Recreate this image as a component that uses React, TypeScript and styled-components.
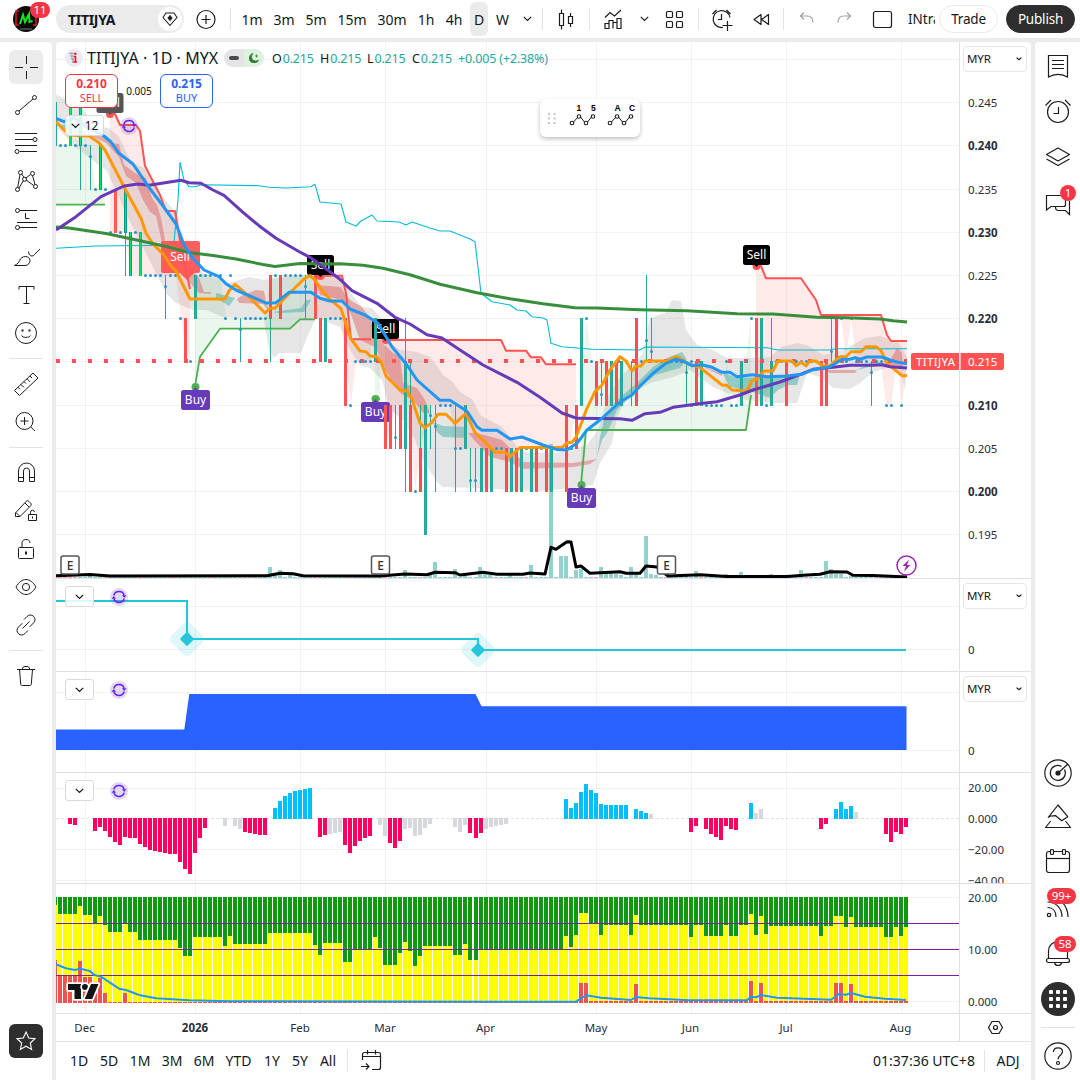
import React from "react";
import styled, { createGlobalStyle } from "styled-components";

const GlobalStyle = createGlobalStyle`
  * { box-sizing: border-box; }
  body {
    margin: 0;
    background: #ebebeb;
    color: #131722;
    font-family: "Noto Sans", "Open Sans", sans-serif;
    overflow: hidden;
  }
  svg { display: block; }
`;

/* ---------- layout ---------- */

const Shell = styled.div`
  width: 1080px;
  height: 1080px;
  display: grid;
  grid-template-rows: 38px 1038px;
  row-gap: 4px;
`;

const Header = styled.header`
  display: flex;
  align-items: center;
  background: #fff;
`;

const Main = styled.main`
  display: grid;
  grid-template-columns: 52px 975px 45px;
  column-gap: 4px;
`;

const Column = styled.div<{ $radius?: string }>`
  display: flex;
  flex-direction: column;
  align-items: center;
  background: #fff;
  border-radius: ${(p) => p.$radius || "0"};
`;

const Slot = styled.div<{ $w: number; $mr?: number }>`
  width: ${(p) => p.$w}px;
  margin-right: ${(p) => p.$mr || 0}px;
  flex: none;
  height: 38px;
  display: flex;
  align-items: center;
  justify-content: center;
  position: relative;
  font-size: 14px;
  white-space: nowrap;
`;

const Divider = styled.div<{ $ml: number; $mr: number }>`
  width: 1px;
  height: 22px;
  background: #e3e3e3;
  flex: none;
  margin: 0 ${(p) => p.$mr}px 0 ${(p) => p.$ml}px;
`;

const SymbolPill = styled.div`
  width: 128px;
  height: 28px;
  padding: 0 2px 0 12px;
  flex: none;
  border-radius: 14px;
  background: #ebebeb;
  display: flex;
  align-items: center;
  justify-content: space-between;
  font-size: 14px;
  font-weight: 700;
  letter-spacing: -0.3px;
`;

const PillCircle = styled.div`
  width: 24px;
  height: 24px;
  border-radius: 50%;
  background: #fff;
  display: flex;
  align-items: center;
  justify-content: center;
`;

const ActiveInterval = styled.div`
  width: 18px;
  height: 34px;
  margin: 0 0 0 2px;
  border-radius: 6px;
  background: #ebebeb;
  display: flex;
  align-items: center;
  justify-content: center;
  font-size: 14px;
`;

const LayoutName = styled.div`
  width: 27px;
  margin: 0 4px 0 5px;
  overflow: hidden;
  white-space: nowrap;
  font-size: 13.5px;
`;

const Pill = styled.div<{ $w: number; $dark?: boolean }>`
  width: ${(p) => p.$w}px;
  height: 28px;
  flex: none;
  border-radius: 14px;
  border: 1px solid ${(p) => (p.$dark ? "#2e2e2e" : "#ebebeb")};
  background: ${(p) => (p.$dark ? "#2e2e2e" : "#fff")};
  color: ${(p) => (p.$dark ? "#fff" : "#131722")};
  display: flex;
  align-items: center;
  justify-content: center;
  margin-right: ${(p) => (p.$dark ? 0 : 8)}px;
  font-size: 13.5px;
  letter-spacing: -0.2px;
`;

const Badge = styled.div<{ $top: number; $left: number; $w: number }>`
  position: absolute;
  top: ${(p) => p.$top}px;
  left: ${(p) => p.$left}px;
  width: ${(p) => p.$w}px;
  height: 16px;
  border-radius: 8px;
  background: #f23645;
  color: #fff;
  font-size: 11.5px;
  line-height: 16px;
  text-align: center;
`;

const Tool = styled.div<{ $h: number }>`
  height: ${(p) => p.$h}px;
  width: 100%;
  flex: none;
  position: relative;
  display: flex;
  align-items: center;
  justify-content: center;
`;

const ToolFace = styled.div<{ $dark?: boolean; $active?: boolean }>`
  width: 34px;
  height: 34px;
  border-radius: 6px;
  display: flex;
  align-items: center;
  justify-content: center;
  background: ${(p) => (p.$dark ? "#2e2e2e" : p.$active ? "#ebebeb" : "transparent")};
`;

const ToolRule = styled.div<{ $m: string }>`
  width: 34px;
  height: 1px;
  flex: none;
  margin: ${(p) => p.$m};
  background: #e3e3e3;
`;

const ToolStack = styled(Column)`
  padding-top: 6px;
`;

const Spacer = styled.div`
  flex: 1;
`;

const RoundFace = styled.div`
  width: 34px;
  height: 34px;
  border-radius: 50%;
  background: #2e2e2e;
  display: grid;
  place-items: center;
`;

/* ---------- chart area ---------- */

const ChartColumn = styled.section`
  background: #fff;
  display: flex;
  flex-direction: column;
  border-radius: 4px 4px 0 0;
  overflow: hidden;
`;

const PaneBox = styled.div<{ $h: number }>`
  position: relative;
  height: ${(p) => p.$h}px;
  flex: none;
  border-bottom: 1px solid #e0e0ea;
`;

const Overlay = styled.div<{ $pt?: number }>`
  position: absolute;
  top: 0;
  left: 9px;
  padding-top: ${(p) => p.$pt || 7}px;
`;

const LegendRow = styled.div`
  display: flex;
  align-items: center;
  height: 18px;
  white-space: nowrap;
`;

const Title = styled.span`
  font-size: 16px;
  margin-left: 4px;
  width: 137px;
  letter-spacing: 0.05px;
`;

const Status = styled.div`
  width: 40px;
  height: 18px;
  border-radius: 9px;
  overflow: hidden;
  display: flex;
  margin-right: 8px;
`;

const StatusHalf = styled.div<{ $bg: string }>`
  flex: 1;
  background: ${(p) => p.$bg};
  display: flex;
  align-items: center;
  justify-content: center;
`;

const Ohlc = styled.span<{ $w: number }>`
  width: ${(p) => p.$w}px;
  font-size: 12.5px;
  letter-spacing: -0.15px;
  color: #26a69a;
  b {
    font-weight: 400;
    color: #131722;
    margin-right: 1px;
  }
`;

const TradeRow = styled.div`
  display: flex;
  align-items: center;
  margin-top: 7px;
`;

const TradeButton = styled.div<{ $color: string }>`
  width: 53px;
  height: 34px;
  border: 1px solid ${(p) => p.$color};
  border-radius: 6px;
  background: #fff;
  color: ${(p) => p.$color};
  text-align: center;
  font-size: 11px;
  line-height: 14px;
  padding-top: 2px;
  strong {
    display: block;
    font-size: 12px;
    letter-spacing: -0.1px;
  }
`;

const Spread = styled.div`
  width: 42px;
  text-align: center;
  font-size: 10px;
`;

const StudyRow = styled.div<{ $mt?: number }>`
  display: flex;
  align-items: center;
  margin-top: ${(p) => p.$mt || 0}px;
  gap: 16px;
`;

const Collapse = styled.div<{ $w: number }>`
  width: ${(p) => p.$w}px;
  height: 21px;
  border: 1px solid #d9d9dc;
  border-radius: 3px;
  background: rgba(255, 255, 255, 0.85);
  display: flex;
  align-items: center;
  justify-content: center;
  gap: 5px;
  font-size: 12px;
`;

const Currency = styled.div<{ $top: number }>`
  position: absolute;
  top: ${(p) => p.$top}px;
  right: 4px;
  width: 64px;
  height: 26px;
  border: 1px solid #e6e6ea;
  border-radius: 4px;
  background: #fff;
  padding: 0 4px 1px 3px;
  display: flex;
  align-items: center;
  justify-content: space-between;
  font-size: 11.5px;
  letter-spacing: -0.1px;
`;

const FloatingBar = styled.div`
  position: absolute;
  left: 484px;
  top: 57px;
  width: 100px;
  height: 38px;
  border-radius: 6px;
  background: #fff;
  box-shadow: 0 2px 4px rgba(0, 0, 0, 0.25);
`;

const RangeBar = styled.div`
  height: 37px;
  display: flex;
  align-items: center;
  padding-left: 8px;
`;

/* ---------- icons ---------- */

const Icon: React.FC<{ size?: number; color?: string; sw?: number; children: React.ReactNode }> = ({
  size = 28,
  color = "#1c1c1c",
  sw = 1,
  children,
}) => (
  <svg width={size} height={size} viewBox={`0 0 ${size} ${size}`} fill="none" stroke={color} strokeWidth={sw}>
    {children}
  </svg>
);

const Chevron = ({ s = 1.1 }: { s?: number }) => (
  <svg width="9" height="6" viewBox="0 0 9 6" fill="none" stroke="#131722" strokeWidth={s}>
    <path d="M.8 .9l3.7 3.5L8.2 .9" />
  </svg>
);

const SmallChevron = () => (
  <svg width="6" height="4" viewBox="0 0 6 4" fill="none" stroke="#131722" strokeWidth="1.2">
    <path d="M.6 .6L3 2.800 5.400 .6" />
  </svg>
);

const leftTools: { [key: string]: React.ReactNode } = {
  cross: <path d="M3 14.5h8M18 14.5h8M14.5 3v8M14.5 18v8" />,
  trend: (
    <>
      <circle cx="5.5" cy="21.5" r="2" />
      <circle cx="22.5" cy="6.5" r="2" />
      <path d="M7 20L21 8" />
    </>
  ),
  fib: (
    <>
      <path d="M3 4.5h22M3 10.5h18M3 16.5h22M7.5 22.5H25" />
      <circle cx="23" cy="10.5" r="2" />
      <circle cx="5" cy="22.5" r="2" />
    </>
  ),
  pattern: (
    <>
      <path d="M5.7 20.5L8 7.5M9.7 7L12 10.6M7 21L11.5 13.5M14 11L18.500 7.500M20.500 8.500L23 17.500M14 13L21.800 18.500" />
      <circle cx="5.500" cy="22.500" r="2" />
      <circle cx="8.500" cy="5.500" r="2" />
      <circle cx="12.500" cy="12.300" r="2" />
      <circle cx="20.500" cy="6.500" r="2" />
      <circle cx="23.500" cy="19.500" r="2" />
    </>
  ),
  forecast: (
    <>
      <path d="M7.500 5.500H25M5 17.500h20M7.500 22.500H25M13.500 8v5.500h4" />
      <circle cx="5.500" cy="5.500" r="2" />
      <circle cx="5.500" cy="22.500" r="2" />
    </>
  ),
  brush: (
    <path d="M2.500 22.500h10.500c3 0 5-2.500 5-5s-2-4-4.500-4c-3 0-4.600 1.500-5.500 3.500-.9 2.200-2.500 4.200-5.500 5.500zM16.500 8.500c.2 3 1.500 4.500 3.500 4.500 1.500 0 2.300-1 3-2l5-5" />
  ),
  text: <path d="M7 8.500v-3h15v3M14.500 5.500v17M11.500 22.500h6" />,
  smile: (
    <>
      <circle cx="14" cy="14" r="10.500" />
      <path d="M9.500 16.500c1 2.500 8 2.500 9 0" />
      <path d="M9.500 11.500h2M16.500 11.500h2" strokeWidth="2" />
    </>
  ),
  ruler: (
    <path d="M2.500 20.500L21 3l5 5L7.500 25.500zM6 17.300l2 2M9 14.500l3 3M12 11.600l2 2M15 8.800l3 3M18 6l2 2" />
  ),
  zoom: (
    <>
      <circle cx="12.500" cy="13" r="8.500" />
      <path d="M12.500 9v8M8.500 13h8M18.800 19l4 4" />
    </>
  ),
  magnet: <path d="M6.500 22.500V12a8 8 0 0 1 16 0v10.500h-5V12a3 3 0 0 0-6 0v10.500zM6.500 18.500h5M17.500 18.500h5" />,
  pencil: (
    <>
      <path d="M3.500 16L14 4.500c1-1 2-1 3 0l1.500 1.500c1 1 1 2 0 3L8 19.500H3.500zM13 6l4 4M4 15.500l4 4" />
      <path d="M16.500 17.500h8v6h-8zM18.500 17.500v-2a2 2 0 0 1 4-.5" />
      <path d="M20.500 19.500v2" />
    </>
  ),
  lock: (
    <>
      <path d="M6.500 13.500a1 1 0 0 1 1-1h13a1 1 0 0 1 1 1v9a1 1 0 0 1-1 1h-13a1 1 0 0 1-1-1zM10 12.500V9a4 4 0 0 1 8-1" />
      <path d="M14 16.500v3" strokeWidth="2" />
    </>
  ),
  eye: (
    <>
      <path d="M4 14c3-5 6.500-7.500 10-7.500S21 9 24 14c-3 5-6.500 7.500-10 7.500S7 19 4 14z" />
      <circle cx="14" cy="14" r="3.600" />
    </>
  ),
  link: (
    <path d="M12 8.500l3-3c2-2 4.500-2 6.500-.2 2 2 2 4.500.2 6.500l-4 4M16 19.500l-3 3c-2 2-4.500 2-6.500.2-2-2-2-4.500-.2-6.500l4-4M10.500 17.500l7-7" />
  ),
  trash: <path d="M5 7.500h18M7.500 7.500l1.200 14.500c.1 1 .6 1.500 1.500 1.500h7.600c.9 0 1.400-.5 1.500-1.500L20.500 7.500M10.500 7c0-1.500 1-2.500 2.500-2.500h2c1.500 0 2.500 1 2.500 2.500" />,
};

const groups = [
  ["trend", "fib", "pattern", "forecast", "brush", "text", "smile"],
  ["ruler", "zoom"],
  ["magnet", "pencil", "lock", "eye", "link"],
  ["trash"],
];

const Refresh = () => (
  <svg width="18" height="18" viewBox="-9 -9 18 18" fill="none">
    <circle r="9" fill="#673ab7" opacity=".2" />
    <path d="M-5.200 -1.500A5.400 5.400 0 0 1 5.200 -1.500M5.200 1.500A5.400 5.400 0 0 1 -5.200 1.500" stroke="#651fff" strokeWidth="1.4" />
    <path d="M3 -1.700h4.400L5.200 1zM-3 1.700h-4.400L-5.200 -1z" fill="#651fff" />
  </svg>
);

/* ---------- chart data ---------- */

const LEFT = 55.3;
const STEP = 5.006;
const barX = (i: number) => Math.round(LEFT + STEP * i - 2.3);

const monthLines = [85, 195, 300, 385, 486, 596, 691, 786, 901];
const priceRows = [59, 102, 145, 189, 232, 275, 318, 361, 405, 448, 491, 534];

const ma = {
  green:
    "56,227 69,228 106,233.500 139,240.500 166,246.500 189,252.500 213,255.500 236,259 263,264.500 275,266.500 300,263.500 326,264 340,263.700 363,265.300 383,268.300 410,274.700 440,284.300 477,292.700 510,298.700 543,303.700 575,307.700 597,308 640,309.700 687,310.700 737,313.700 773,314 817,317.300 847,317.700 880,319 893,320.700 907,322",
  purple:
    "56,230 76,216.700 101,196.700 124,186 138,184 149,185.300 181,180.300 189,182.700 201,183.300 213,190 224,195.300 243,212.300 259,225.700 276,238.300 301,252.700 310,257.300 330,271.700 340,279.300 352,290.700 377,303.300 395,317.300 410,324 427,334.700 442,338 460,350 483,365 517,382.300 540,397.300 562,413 577,418.300 620,418.700 632,420.300 645,413.700 660,412.300 673,407.300 703,403.300 717,401.700 740,395 753,390 780,382 800,374.700 813,369.300 833,367.300 850,365.300 873,365.300 882,364.700 890,366.700 907,368",
  blue:
    "56,118.300 64,121.700 74,117.300 83,124 89,128 104,136 111,142 119,153.300 133,164 149,187.300 163,206 176,224 184,245 193,258.300 204,270 219,276.700 226,283.700 236,290 253,297.300 266,303 276,302.700 289,292.300 311,292.300 320,298.300 330,301 342,301 350,309 365,315 378,323.300 392,346.700 407,365 417,380 440,400.300 450,400.300 467,411.300 477,426.700 482,430.300 497,430.300 510,439 522,437 543,445 557,449.700 567,449.700 577,443.300 587,430 600,420 613,408.300 622,400.700 632,395 640,386 653,373.300 665,364 675,359.300 683,361 692,365.700 702,364.700 712,367.300 722,372.300 730,372.300 737,376.700 752,374.700 767,376.700 787,376 803,374 812,370 830,366.700 842,359.300 850,359.300 855,357.700 860,359.300 867,357 882,357 890,360 898,362.300 907,363.700",
  orange:
    "56,121.700 69,135 89,136 99,142.700 105,150 124,186.700 141,218.300 146,233.300 153,244 164,255 171,266 176,271 190,299 225,299 229,291 235,284.300 241,289.300 249,296.700 265,313 270,308.300 275,308.300 289,293.700 304,279 310,275.700 315,280 322,290.700 330,299.300 341,308.700 347,327.300 351,339 360,351 366,351.700 370,356 377,356.700 381,361.700 386,376 400,390 407,391 412,399.300 420,423.300 425,427.700 431,423.300 438,414.300 446,414.300 455,423.300 466,413.300 475,432.700 483,440 495,452.300 505,452.300 510,456.700 520,447.500 562,447.500 567,442.700 572,442.300 576,437.300 587,408.300 595,391.700 602,385 610,370 620,356.700 626,361 632,371 636,366 641,366 645,361 667,361 676,356.700 682,359.300 688,364 700,367.300 722,385 727,385.300 732,390 747,391 752,380.700 758,378.300 764,371 773,371 778,361 792,361 796,365.700 801,362.300 806,365.700 810,361 816,361 822,365.700 830,365.700 840,356.700 846,356.700 851,351.700 861,351.700 866,346.700 876,346.700 881,350.700 887,363.300 902,375.700 907,375.700",
  cyan:
    "56,248.300 96,246 166,245.300 174,242.300 178,200 180,162.300 184,180 189,186.700 196,186.700 201,184.700 259,185.700 269,187.300 286,188 311,186.700 315,184.300 320,202 341,204 346,222 356,226 361,221 372,215 377,221 399,222 406,225 412,222 430,228 440,231 450,231 470,239 475,241.700 481,293.300 492,301.700 510,305 517,310 526,311 532,316.700 543,318 547,320 551,343.300 562,346.700 580,348.300 592,349.300 640,350 645,347 767,347.700 778,350 830,350 835,348.700 907,348.700",
  volume:
    "56,575.700 90,574.500 110,576 267,575.700 280,573.300 293,573.700 303,575.700 380,576 405,574 427,574.700 435,572.300 455,572.700 460,575 483,572.300 497,574.300 523,574.300 530,573 545,574 551,547.300 556,549.300 567,541.700 571,542 576,567 581,566 590,573.300 620,571.700 626,573.300 640,573.300 646,566 657,567 668,576 700,574.700 727,576.500 787,576.500 807,575 820,574.300 830,571.700 847,572 853,575.300 873,575.500 907,577",
};

const bearLines = [
  "110,114 115,114 120,125 136,125 140,130.700 145,166 160,195 166,211 175,211 181,246.700 190,289",
  "315,275.700 342,275.700 346,293 351,339.300 371,339.300",
  "385,340 501,340 506,350.700 526,350.700 531,357.300 541,357.300 546,364.300 576,364.300",
  "756,266 761,266 766,278.300 801,278.300 816,300 821,315 881,315 887,335 891,341 907,341",
];
const bearBottoms = [
  "190,361 186,350 181,318 176,275 131,275 125,232 110,232",
  "371,361 356,361 351,405 347,370 341,318 315,318",
  "576,405 570,448 480,448 455,448 450,405 431,405 421,448 415,491 410,405 396,405 385,448",
  "907,361 902,405 897,361 891,405 886,405 881,361 856,361 851,318 846,361 841,318 832,361 776,361 766,405 756,361",
];
const bullLines = [
  "56,204.700 105,204.700",
  "195,386.700 200,356.700 220,328.700 290,328.700 300,319.300 315,319.300",
  "375,399 380,399",
  "581,485 586,430 746,430 751,395",
];
const bullBottoms = [
  "105,189 100,180 96,189 89,145 56,145",
  "315,275 270,275 265,318 226,318 220,275 195,275",
  "380,361 375,361",
  "751,318 746,361 740,361 736,405 731,405 727,361 721,405 707,405 697,361 592,361 586,318 581,405",
];

const cloud =
  "56,95 76,103 89,117 99,127 109,128 119,137 131,162 144,168 156,188 163,197 176,213 189,257 203,273 229,283 249,277 264,280 286,277 309,274 342,278 352,295 362,307 372,308 380,317 390,343 400,350 417,352 430,357 438,367 443,375 453,382 460,392 468,397 473,400 480,415 502,427 510,437 518,448 527,453 557,453 587,445 598,430 608,397 620,377 635,363 643,353 647,330 650,318 665,313 672,300 681,301 686,330 697,345 713,350 727,358 747,358 770,357 782,347 797,343 807,345 823,355 837,352 847,348 865,338 880,336 898,342 907,357 905,390 902,377 890,367 873,372 860,383 850,389 833,388 823,378 807,373 797,403 773,403 747,400 727,393 713,387 690,370 673,377 650,383 627,397 617,417 612,443 600,463 593,485 573,488 540,491 510,490 477,488 443,487 437,482 423,460 415,440 403,420 390,410 382,380 370,368 360,365 350,350 340,327 316,318 308,335 301,353 279,353 274,358 269,350 264,320 223,317 206,310 193,310 176,303 166,293 146,253 129,220 116,190 106,170 96,163 76,147 56,127";

const redBands = [
  "89,135 106,137 111,143 119,144 124,165 135,173 146,178 152,198 157,205 161,218 165,240 162,243 156,216 150,212 143,200 136,183 126,176 119,157 106,143",
  "189,267 199,278 204,292 211,292 211,294 199,293 189,282",
  "237,299 243,295 256,290 264,291 268,310 263,304 239,303",
  "317,285 340,287 350,300 362,307 368,315 382,343 393,353 400,357 403,383 417,388 425,400 430,413 423,413 413,400 400,393 387,373 375,347 360,340 350,312 342,300 320,295",
  "468,433 477,433 502,440 510,448 523,462 573,463 597,459 590,464 573,467 523,469 510,462 490,457 477,443",
  "705,367 722,374 722,376 705,368",
  "825,370 857,370 855,373 830,373",
  "887,366 897,348 902,353 903,367",
];
const tealBands = [
  "56,125 72,124 86,133 84,137",
  "216,293 235,298 229,306 216,298",
  "273,312 301,308 306,300 311,300 304,312 279,313",
  "433,422 443,426 467,427 467,438 443,437 437,432",
  "597,457 600,437 605,415 617,400 637,383 653,367 667,358 682,352 687,360 680,368 655,375 637,390 617,410 607,433 602,440",
  "722,372 737,378 767,377 787,376 800,375 797,385 788,385 778,390 770,398 747,390 730,387",
  "857,370 873,361 887,363 873,366",
];

// x, top, bottom, kind (a: hollow teal over red, r: red, w: wick, g: bright green, m: mixed)
type Candle = [number, number, number, string];
const candles: Candle[] = [
  [56, 102, 145, "w"], [70, 102, 145, "m"], [80, 102, 145, "g"], [80, 145, 189, "w"], [90, 145, 189, "w"],
  [100, 145, 189, "g"], [115, 189, 232, "m"], [125, 189, 232, "g"], [125, 232, 275, "w"], [130, 232, 275, "g"],
  [140, 232, 275, "m"], [165, 275, 318, "w"], [185, 318, 361, "r"], [195, 275, 318, "a"], [240, 318, 361, "w"],
  [270, 275, 318, "a"], [270, 318, 361, "w"], [280, 275, 318, "a"], [305, 275, 318, "w"], [315, 275, 318, "r"],
  [320, 318, 361, "a"], [325, 318, 361, "a"], [345, 318, 405, "r"], [375, 318, 361, "a"], [385, 405, 448, "r"],
  [390, 405, 448, "r"], [395, 405, 448, "w"], [400, 405, 448, "a"], [405, 318, 491, "w"], [405, 361, 448, "a"],
  [410, 361, 405, "w"], [410, 405, 491, "a"], [420, 405, 448, "w"], [420, 448, 491, "a"], [425, 405, 534, "a"],
  [430, 405, 448, "w"], [435, 405, 491, "w"], [455, 405, 491, "w"], [465, 405, 448, "a"], [470, 448, 491, "w"],
  [475, 448, 491, "w"], [481, 448, 491, "a"], [486, 448, 491, "a"], [491, 448, 491, "a"], [506, 448, 491, "a"],
  [511, 448, 491, "a"], [516, 448, 491, "a"], [521, 448, 491, "a"], [531, 448, 491, "a"], [536, 448, 491, "a"],
  [546, 448, 491, "a"], [551, 448, 491, "a"], [566, 405, 491, "a"], [576, 405, 448, "a"], [581, 318, 405, "a"],
  [596, 361, 405, "a"], [601, 361, 405, "w"], [606, 361, 405, "a"], [611, 361, 405, "a"], [616, 361, 405, "a"],
  [621, 361, 405, "a"], [631, 361, 405, "w"], [636, 318, 405, "a"], [646, 275, 361, "w"], [651, 318, 361, "w"],
  [686, 361, 405, "w"], [696, 361, 405, "a"], [701, 361, 405, "a"], [741, 361, 405, "a"], [756, 318, 405, "r"],
  [761, 318, 405, "a"], [771, 318, 361, "w"], [771, 361, 405, "a"], [786, 361, 405, "a"], [821, 361, 405, "r"],
  [826, 361, 405, "a"], [831, 318, 361, "w"], [836, 318, 361, "a"], [871, 361, 405, "w"],
];

const dotRows: [number, number[]][] = [
  [145, [60, 65, 75, 85]],
  [156, [90]],
  [189, [95, 105]],
  [232, [110, 120, 135]],
  [275, [145, 150, 155, 160, 170, 175, 200, 205, 210, 215, 220, 230, 275, 285, 290, 295, 300, 310]],
  [286, [165, 305]],
  [318, [180, 225, 235, 245, 250, 255, 260, 265, 330, 335, 340, 586, 751, 841, 851]],
  [329, [240]],
  [340, [646]],
  [351, [651, 831]],
  [361, [190, 355, 360, 365, 370, 380, 591, 626, 641, 656, 661, 666, 671, 676, 681, 691, 726, 746, 776, 781, 791, 796, 801, 806, 811, 816, 846, 856, 861, 866, 876, 881]],
  [372, [686, 871]],
  [394, [601]],
  [405, [350, 440, 445, 450, 691, 706, 711, 716, 721, 731, 736, 766, 886, 891, 901]],
  [415, [430]],
  [426, [435]],
  [437, [395]],
  [448, [455, 460, 496, 501, 526, 541, 556, 561, 571]],
  [480, [470, 475]],
  [491, [415]],
];

const volumes: [number, number][] = [
  [90, 3], [165, 3], [270, 11], [275, 3], [280, 8], [290, 3], [305, 3], [405, 8], [430, 4], [435, 16], [455, 9], [465, 3],
  [480, 11], [485, 4], [490, 3], [510, 4], [531, 13], [551, 134], [561, 22], [566, 22], [576, 8], [581, 9], [601, 11],
  [606, 4], [611, 5], [616, 4], [621, 3], [631, 11], [636, 5], [646, 42], [651, 4], [656, 3], [686, 4], [696, 7],
  [726, 4], [741, 6], [771, 4], [801, 8], [826, 17], [831, 9], [836, 4], [841, 4], [851, 2],
];

// first bar, colour, bar ends
const P = "#ff0061";
const G = "#d6d8de";
const B = "#00bfff";
const histogram: [number, string, number[]][] = [
  [3, P, [824, 825]],
  [8, P, [831, 827, 831, 837, 842, 845, 837, 838, 838, 844, 847, 850, 851, 852, 853, 854, 854, 862, 869, 874, 853, 838, 828]],
  [34, G, [826]],
  [36, G, [826, 829]],
  [38, P, [832, 833, 834, 835, 835]],
  [44, B, [808, 801, 796, 793, 791, 790, 789, 788]],
  [53, P, [837, 835]],
  [55, G, [834, 833, 832]],
  [58, P, [845, 853, 846, 841, 838, 836]],
  [65, G, [825, 836]],
  [67, P, [843, 848, 841]],
  [70, G, [829, 828, 836, 835, 828, 824]],
  [80, G, [827, 832, 825]],
  [83, P, [833, 838, 833]],
  [86, G, [829, 827, 826, 825, 824]],
  [102, B, [799, 808, 803, 792, 784, 790, 793, 804, 805, 805, 805, 805, 805]],
  [116, B, [809, 811, 813]],
  [119, G, [814]],
  [127, P, [832, 826]],
  [130, P, [829, 834, 837, 840, 826, 829, 830]],
  [139, B, [803]],
  [140, G, [813, 809]],
  [153, P, [829, 824]],
  [156, B, [809, 802, 809, 806]],
  [160, G, [812]],
  [166, P, [834, 842, 832, 834, 827]],
];

// run lengths of the green/yellow boundary
const boundary: [number, number][] = [
  [1, 905], [4, 914], [1, 906], [2, 915], [1, 923], [1, 916], [1, 925], [3, 932], [1, 923], [2, 932], [8, 940], [1, 948],
  [2, 956], [6, 937], [1, 946], [1, 936], [7, 944], [9, 933], [1, 945], [1, 955], [4, 943], [2, 962], [4, 949], [1, 937],
  [1, 948], [3, 965], [1, 953], [1, 942], [1, 951], [1, 966], [1, 956], [6, 946], [2, 955], [1, 944], [2, 960], [17, 949],
  [1, 936], [1, 947], [1, 935], [2, 913], [2, 924], [1, 935], [5, 925], [1, 935], [1, 915], [10, 925], [1, 937], [2, 925],
  [4, 936], [1, 925], [2, 936], [2, 925], [1, 914], [1, 935], [1, 916], [1, 934], [10, 926], [1, 936], [2, 926], [2, 916],
  [1, 927], [1, 917], [6, 927], [2, 937], [1, 927], [1, 936], [1, 927],
];
const splits = boundary.flatMap(([n, y]) => Array(n).fill(y) as number[]);
const redTops: { [i: number]: number } = {
  0: 960, 1: 975, 2: 975, 3: 975, 4: 975, 5: 961, 6: 977, 7: 977, 8: 982, 9: 978, 10: 993, 14: 993,
  105: 983, 106: 983, 116: 984, 139: 981, 141: 983, 156: 983, 157: 983, 159: 984,
};
const pressure =
  "56,964.300 66,968.300 75,970 80,968.700 90,971 94,974.700 101,976.700 119,988.700 126,990 139,995 156,998.300 189,1000.300 229,1001.300 516,1001.700 576,1001.700 581,998.300 586,995.300 601,997.700 631,1000 636,997 649,998.300 689,1000.300 747,1000.300 751,996.700 756,997.300 761,995 777,997.700 831,999.700 839,994 846,994.700 851,993 865,996.700 885,998.700 906,1000";

/* ---------- chart pieces ---------- */

const Frame: React.FC<{ top: number; h: number; rows: number[]; children?: React.ReactNode }> = ({ top, h, rows, children }) => (
  <svg width="975" height={h} viewBox={`56 ${top} 975 ${h}`} fontFamily='"Noto Sans", sans-serif' fontSize="12">
    <g shapeRendering="crispEdges" fill="#2a2e39" fillOpacity=".06">
      {monthLines.map((x) => (
        <rect key={x} x={x} y={top} width="1" height={h} />
      ))}
      {rows.map((y) => (
        <rect key={y} x="56" y={y} width="903" height="1" />
      ))}
    </g>
    {children}
    <rect x="959" y={top} width="1" height={h} fill="#e0e0ea" />
  </svg>
);

const AxisText: React.FC<{ y: number; bold?: boolean; children: React.ReactNode }> = ({ y, bold, children }) => (
  <text x="968" y={y + 4.3} fontSize="11.500" fontWeight={bold ? 700 : 400} fill="#2a2e39">
    {children}
  </text>
);

const Line = ({ points, color, w = 3 }: { points: string; color: string; w?: number }) => (
  <polyline points={points} fill="none" stroke={color} strokeWidth={w} strokeLinejoin="round" />
);

const CandleShape = ({ c: [x, t, b, kind] }: { c: Candle }) => {
  const h = b - t + 1;
  if (kind === "w") return <rect x={x} y={t} width="1" height={h} fill="#26a69a" />;
  if (kind === "r") return <rect x={x - 1} y={t} width="3" height={h} fill="#ff5252" />;
  const edge = kind === "m" ? "#ff5252" : kind === "g" ? "#089981" : "#26a69a";
  const core = kind === "g" || kind === "m" ? "#00e676" : "#ff5252";
  return (
    <>
      <rect x={x - 1} y={t} width="3" height={h} fill={edge} />
      <rect x={x} y={t} width={1} height={h} fill={core} />
    </>
  );
};

const Tag = ({ x, y, text, bg, up }: { x: number; y: number; text: string; bg: string; up?: boolean }) => {
  const w = text === "Buy" ? 29 : 27;
  return (
    <g>
      <circle cx={x} cy={up ? y - 3 : y + 21} r="4" fill={up ? "#4caf50" : "#ff5252"} />
      <path d={up ? `M${x - 3} ${y + 1}l3-4 3 4z` : `M${x - 3} ${y + 19}l3 3 3-3z`} fill={bg} />
      <rect x={x - w / 2} y={y} width={w} height="20" rx="2.500" fill={bg} />
      <text x={x} y={y + 14.200} textAnchor="middle" fontSize="12" fill="#fff">
        {text}
      </text>
    </g>
  );
};

const PricePane = () => (
  <Frame top={42} h={536} rows={priceRows}>
    <g shapeRendering="crispEdges">
      {splits.map((_, i) => (
        <rect key={i} x={barX(i)} y={577} width="4" height="1" fill={i % 7 === 3 || i < 5 ? "#f7a9a7" : "#92d2cc"} />
      ))}
      {volumes.map(([x, h]) => (
        <rect key={x} x={x - 2} y={578 - h} width="4" height={h} fill="#92d2cc" />
      ))}
    </g>
    <polygon points={cloud} fill="#787878" opacity=".19" />
    {bearLines.map((l, i) => (
      <polygon key={i} points={`${l} ${bearBottoms[i]}`} fill="#ff5252" opacity=".12" />
    ))}
    {bullLines.map((l, i) => (
      <polygon key={i} points={`${l} ${bullBottoms[i]}`} fill="#4caf50" opacity=".11" />
    ))}
    {redBands.map((p) => (
      <polygon key={p} points={p} fill="#d94444" opacity=".38" />
    ))}
    {tealBands.map((p) => (
      <polygon key={p} points={p} fill="#26a69a" opacity=".42" />
    ))}
    <Line points={ma.cyan} color="#00bcd4" w={1.1} />
    {bearLines.map((l) => (
      <Line key={l} points={l} color="#ff5252" w={2} />
    ))}
    {bullLines.map((l) => (
      <Line key={l} points={l} color="#4caf50" w={1.8} />
    ))}
    <path d="M163 241h35a2 2 0 0 1 2 2v28a2 2 0 0 1-2 2h-4l-7 7-7-7h-17a2 2 0 0 1-2-2v-28a2 2 0 0 1 2-2z" fill="#ff5252" opacity=".93" />
    <text x="180" y="261" textAnchor="middle" fontSize="12" fill="#fff">Sell</text>
    <Tag x={110} y={93} text="Sell" bg="#555" />
    <Tag x={320.500} y={255} text="Sell" bg="#000" />
    <Tag x={385.500} y={319} text="Sell" bg="#000" />
    <Tag x={756.500} y={245} text="Sell" bg="#000" />
    <Tag x={195.500} y={390} text="Buy" bg="#673ab7" up />
    <Tag x={375.500} y={402} text="Buy" bg="#673ab7" up />
    <Tag x={581.500} y={488} text="Buy" bg="#673ab7" up />
    <g shapeRendering="crispEdges">
      {candles.map((c, i) => (
        <CandleShape key={i} c={c} />
      ))}
    </g>
    <path d="M56 361H907" stroke="#ff5252" strokeWidth="4" strokeDasharray="4 12" />
    {dotRows.map(([y, xs]) => xs.map((x) => <circle key={`${x}-${y}`} cx={x + 0.5} cy={y + 0.5} r="1.500" fill="#2b93c4" />))}
    <Line points={ma.orange} color="#ff9800" />
    <Line points={ma.green} color="#388e3c" />
    <Line points={ma.purple} color="#673ab7" />
    <Line points={ma.blue} color="#2196f3" />
    <Line points={ma.volume} color="#000" />
    {[70, 380.5, 666.5].map((x) => (
      <g key={x}>
        <rect x={x - 9} y="556" width="18" height="18" rx="2" fill="#fff" stroke="#555" strokeWidth="1.500" />
        <text x={x} y="569.500" textAnchor="middle" fontSize="12" fontWeight="500" fill="#333">E</text>
      </g>
    ))}
    <circle cx="906.500" cy="565.500" r="9.500" fill="#fff" stroke="#9c27b0" strokeWidth="1.500" />
    <path d="M909 559.500l-6.500 6.500h3.500l-2 5.500 6.500-6.500h-3.500z" fill="#9c27b0" />
    {priceRows.slice(1).map((y, i) => (
      <AxisText key={y} y={y + 0.5} bold={i % 2 === 1}>
        {i === 6 ? "" : (0.245 - i * 0.005).toFixed(3)}
      </AxisText>
    ))}
    <rect x="911" y="353" width="93" height="17" rx="2" fill="#ff5252" />
    <rect x="960" y="353" width="1" height="17" fill="#fff" opacity=".6" />
    <text x="916" y="366" fontSize="11.500" fill="#fff" textLength="39">TITIJYA</text>
    <text x="968" y="366" fontSize="11.500" fill="#fff">0.215</text>
  </Frame>
);

const Diamond = ({ x, y }: { x: number; y: number }) => (
  <g transform={`translate(${x} ${y}) rotate(45)`} fill="#26c6da">
    <rect x="-13.500" y="-13.500" width="27" height="27" rx="5" opacity=".15" />
    <rect x="-5.200" y="-5.200" width="10.400" height="10.400" rx="1.500" />
  </g>
);

const HistogramPane = () => (
  <Frame top={773} h={110} rows={[788, 849, 880]}>
    <path d="M56 818.500H959" stroke="#e2e2e5" strokeDasharray="3 2" />
    <g shapeRendering="crispEdges">
      {histogram.map(([start, color, ys]) =>
        ys.map((y, n) => (
          <rect
            key={start + n}
            x={barX(start + n)}
            y={Math.min(y, 818)}
            width="4"
            height={Math.abs(y - 818) + (y < 818 ? 1 : 0)}
            fill={color}
          />
        ))
      )}
    </g>
    <AxisText y={788}>20.00</AxisText>
    <AxisText y={819}>0.000</AxisText>
    <AxisText y={850}>−20.00</AxisText>
    <AxisText y={881}>−40.00</AxisText>
  </Frame>
);

const PressurePane = () => (
  <Frame top={884} h={129} rows={[897, 1001]}>
    <g shapeRendering="crispEdges">
      {splits.map((y, i) => {
        const x = barX(i);
        const red = redTops[i] ?? (i > 104 ? 1001 : 1002);
        return (
          <React.Fragment key={i}>
            <rect x={x} y="897" width="4" height={y - 897} fill="#109910" />
            <rect x={x} y={y} width="4" height={1002 - y} fill="#ffff00" />
            <rect x={x} y={red} width="4" height={1003 - red} fill="#ef5350" />
          </React.Fragment>
        );
      })}
      {[923, 949, 975].map((y) => (
        <rect key={y} x="56" y={y} width="903" height="1" fill="#7b1fa2" />
      ))}
    </g>
    <Line points={pressure} color="#2196f3" w={2} />
    {/* brand mark */}
    <g stroke="#fff" strokeWidth="3.500" strokeLinejoin="round" paintOrder="stroke" fill="#131313">
      <path d="M68 984h13v15h-6.500v-9H68z" />
      <circle cx="85" cy="987" r="3" />
      <path d="M91 984h7.500l-6.300 15H84.700z" />
    </g>
    <AxisText y={898}>20.00</AxisText>
    <AxisText y={950}>10.00</AxisText>
    <AxisText y={1002}>0.000</AxisText>
  </Frame>
);

const months: [number, string][] = [
  [84.5, "Dec"], [195, "2026"], [300, "Feb"], [385, "Mar"], [485.5, "Apr"], [596, "May"], [690.5, "Jun"], [786, "Jul"], [900.5, "Aug"],
];

const TimeAxis = () => (
  <svg width="975" height="27" viewBox="56 1014 975 27" fontFamily='"Noto Sans", sans-serif' fontSize="11.500" fill="#2a2e39">
    {months.map(([x, m]) => (
      <text key={m} x={x} y="1032" textAnchor="middle" fontWeight={m === "2026" ? 700 : 400}>
        {m}
      </text>
    ))}
    <rect x="959" y="1014" width="1" height="27" fill="#e0e0ea" />
    <path d="M988.500 1027.500l3.500-6h7l3.500 6-3.500 6h-7z" fill="none" stroke="#1c1c1c" strokeWidth="1.200" />
    <circle cx="995.500" cy="1027.500" r="2" fill="none" stroke="#1c1c1c" strokeWidth="1.200" />
  </svg>
);

const Study = ({ mt, label }: { mt?: number; label?: string }) => (
  <StudyRow $mt={mt}>
    <Collapse $w={label ? 39 : 29}>
      <Chevron s={1.3} />
      {label}
    </Collapse>
    <Refresh />
  </StudyRow>
);

const CurrencySelect = ({ top }: { top: number }) => (
  <Currency $top={top}>
    MYR <SmallChevron />
  </Currency>
);

/* ---------- toolbars ---------- */

const TopBar = () => (
  <Header>
    <Slot $w={56}>
      <svg width="56" height="38" viewBox="0 0 56 38">
        <circle cx="26" cy="19" r="13" fill="#0a0a0a" />
        <path d="M19 11h-3v14h3M33 14h3v11h-3" fill="none" stroke="#e01020" strokeWidth="1.600" />
        <path d="M20 24l3-9 2 7 4-8 .5 8 3-1" fill="none" stroke="#19e619" strokeWidth="2" />
        <path d="M20 29h12" stroke="#777" strokeWidth="1" />
      </svg>
      <Badge $top={2} $left={30} $w={20}>11</Badge>
    </Slot>
    <SymbolPill>
      TITIJYA
      <PillCircle>
        <Icon size={18} sw={1.1}>
          <path d="M5 3h8l3 4.500L9 15.500 2 7.500z" strokeLinejoin="round" />
          <path d="M9 5v6M6.500 8h5" />
          <circle cx="9" cy="8" r="1.500" fill="#1c1c1c" />
        </Icon>
      </PillCircle>
    </SymbolPill>
    <Slot $w={45}>
      <Icon size={21} sw={1.2}>
        <circle cx="10" cy="10.500" r="9" />
        <path d="M10 6v9M5.500 10.500h9" />
      </Icon>
    </Slot>
    <Divider $ml={1} $mr={5} />
    <Slot $w={32}>1m</Slot>
    <Slot $w={32}>3m</Slot>
    <Slot $w={32}>5m</Slot>
    <Slot $w={40}>15m</Slot>
    <Slot $w={40}>30m</Slot>
    <Slot $w={28}>1h</Slot>
    <Slot $w={28}>4h</Slot>
    <ActiveInterval>D</ActiveInterval>
    <Slot $w={29}>W</Slot>
    <Slot $w={20}><Chevron /></Slot>
    <Divider $ml={5} $mr={9} />
    <Slot $w={28}>
      <Icon>
        <path d="M7.500 8.500h4v12h-4zM9.500 4.500v4M9.500 20.500v4M16.500 11.500h4v7h-4zM18.500 8v3.500M18.500 18.500V22" strokeWidth="1.200" />
      </Icon>
    </Slot>
    <Divider $ml={9} $mr={10} />
    <Slot $w={28}>
      <Icon sw={1.2}>
        <path d="M5 23.500v-5h4v5zM9 23.500v-8h4v8M13 23.500v-6h4v6M17 23.500v-10h4v10zM5 12.500l5-5 4.500 3.500 6.500-6" />
      </Icon>
    </Slot>
    <Slot $w={32}><Chevron /></Slot>
    <Slot $w={30}>
      <Icon sw={1.2}>
        <rect x="5.500" y="6.500" width="6" height="6" rx="1" />
        <rect x="15.500" y="6.500" width="6" height="6" rx="1" />
        <rect x="5.500" y="16.500" width="6" height="6" rx="1" />
        <rect x="15.500" y="16.500" width="6" height="6" rx="1" />
      </Icon>
    </Slot>
    <Divider $ml={8} $mr={8} />
    <Slot $w={30}>
      <Icon sw={1.2}>
        <path d="M22 12.500A8.500 8.500 0 1 0 15 22.500M10 14.500h3.500V9M4.500 9l4-4M18.500 5l4 4M19.500 16v10M14.500 20.500h10" />
      </Icon>
    </Slot>
    <Slot $w={47}>
      <Icon sw={1.2}>
        <path d="M14 9.500v10L7 14.500zM21.500 9.500v10l-7-5z" strokeLinejoin="round" />
      </Icon>
    </Slot>
    <Divider $ml={-1} $mr={9} />
    <Slot $w={28}>
      <Icon color="#a0a0a0" sw={1.2}>
        <path d="M11 7.500L7.500 11l3.500 3.500M7.500 11H14c4 0 6 2.500 6 6.500" />
      </Icon>
    </Slot>
    <Slot $w={47}>
      <Icon color="#a0a0a0" sw={1.2}>
        <path d="M16 7.500l3.500 3.500-3.500 3.500M19.500 11H13c-4 0-6 2.500-6 6.500" />
      </Icon>
    </Slot>
    <Slot $w={30} $mr={5}>
      <Icon sw={1.2}>
        <rect x="4.500" y="6.500" width="18" height="16" rx="2" />
      </Icon>
    </Slot>
    <LayoutName>INtra</LayoutName>
    <Pill $w={59}>Trade</Pill>
    <Pill $w={69} $dark>Publish</Pill>
  </Header>
);

const LeftBar = () => (
  <ToolStack $radius="0 4px 0 0">
    <Tool $h={38}>
      <ToolFace $active><Icon>{leftTools.cross}</Icon></ToolFace>
    </Tool>
    {groups.map((names, g) => (
      <React.Fragment key={g}>
        {g > 0 && <ToolRule $m="6px 0" />}
        {names.map((n) => (
          <Tool $h={38} key={n}><Icon>{leftTools[n]}</Icon></Tool>
        ))}
      </React.Fragment>
    ))}
    <Spacer />
    <Tool $h={78}>
      <ToolFace $dark>
        <Icon color="#fff" sw={1.1}>
          <path d="M14 5l2.700 6 6.300.700-4.700 4.300 1.300 6.500L14 19.200l-5.600 3.300 1.300-6.500L5 11.700l6.300-.7z" />
        </Icon>
      </ToolFace>
    </Tool>
  </ToolStack>
);

const RightBar = () => (
  <Column $radius="4px 0 0 0">
    <Tool $h={47}>
      <Icon sw={1.2}><path d="M4.500 3.500h19v21.500c-5.500-3.500-13.500-3.500-19 0zM8 8.500h12M8 12.500h12M8 16.500h12" /></Icon>
    </Tool>
    <Tool $h={43}>
      <Icon sw={1.2}>
        <circle cx="14" cy="15" r="10.500" />
        <path d="M9.500 16.500h5V10M1.500 8.500L7 3M26.500 8.500L21 3" />
      </Icon>
    </Tool>
    <Tool $h={50}>
      <Icon sw={1.2}>
        <path d="M2.500 11.500L14 5l11.500 6.500L14 18zM2.500 16L14 22.500 25.500 16" strokeLinejoin="round" />
      </Icon>
    </Tool>
    <Tool $h={43}>
      <Icon sw={1.200}>
        <path d="M2.500 5.500h17c1 0 2 .8 2 2v7c0 1-1 2-2 2H7l-4.500 3.500zM11.500 17c0 2 1 3.500 3 3.500h7l4 4V11" />
      </Icon>
      <Badge $top={3} $left={25} $w={16}>1</Badge>
    </Tool>
    <Spacer />
    <Tool $h={44}>
      <Icon sw={1.2}>
        <circle cx="14" cy="14" r="13.200" />
        <path d="M20.500 10.500A7.500 7.500 0 1 1 17.500 7.400M14 14L24 5" />
        <circle cx="14" cy="14" r="2" fill="#1c1c1c" />
      </Icon>
    </Tool>
    <Tool $h={44}>
      <Icon sw={1.2}>
        <path d="M14 2L4.300 14.300 7 13l4.700-.3 6 5 6-4zM6.700 18L1.500 24.500h25L21.500 18" strokeLinejoin="round" />
      </Icon>
    </Tool>
    <Tool $h={44}>
      <Icon sw={1.200}>
        <rect x="2.500" y="4.500" width="23" height="21" rx="2.500" />
        <path d="M2.500 11.500h23" />
        <rect x="6.500" y="2.500" width="3" height="5" rx="1" fill="#fff" />
        <rect x="18.500" y="2.500" width="3" height="5" rx="1" fill="#fff" />
      </Icon>
    </Tool>
    <Tool $h={48}>
      <Icon sw={1.2}>
        <circle cx="5" cy="22" r="1.700" />
        <path d="M3.500 14.500c5.500 0 8.500 4 8.500 9.500M3.500 9C12 9 18 15 18 24M5 3.500C16 3.500 24 13 24 24" />
      </Icon>
      <Badge $top={5} $left={12} $w={29}>99+</Badge>
    </Tool>
    <Tool $h={44}>
      <Icon sw={1.2}>
        <rect x="2.500" y="19.500" width="23" height="4" rx="2" />
        <path d="M4.500 19.500V12a9.500 9.500 0 0 1 19 0v7.500M10.500 24c.5 1.700 1.700 2.500 3.500 2.500s3-.8 3.500-2.500" />
      </Icon>
      <Badge $top={5} $left={19} $w={22}>58</Badge>
    </Tool>
    <Tool $h={48}>
      <RoundFace>
        <svg width="20" height="20" fill="#fff">
          {[1, 8, 15].map((y) => [1, 8, 15].map((x) => <rect key={`${x}${y}`} x={x} y={y} width="4" height="4" rx="1" />))}
        </svg>
      </RoundFace>
    </Tool>
    <ToolRule $m="4px 0 3px" />
    <Tool $h={49}>
      <Icon sw={1.2}>
        <circle cx="14" cy="14" r="13.200" />
        <path d="M9.500 10c0-2.700 2-4.200 4.500-4.200s4.500 1.500 4.500 4c0 3.500-4.500 3.500-4.500 7.500" />
        <circle cx="14" cy="21" r="1.500" />
      </Icon>
    </Tool>
  </Column>
);

const WaveTools = () => (
  <FloatingBar>
    <svg width="100" height="38" fontFamily='"Liberation Sans", sans-serif' fontSize="8.500" fontWeight="700">
      {[14, 18.5, 23].map((y) => [8, 13.5].map((x) => <rect key={`${x}-${y}`} x={x} y={y} width="2" height="2" fill="#c4c4c4" />))}
      {[32, 70].map((x, n) => (
        <g key={x} transform={`translate(${x} 0)`}>
          <path d="M1.500 23L6 18M8.500 18l4 5M15.500 23l4-5" stroke="#1c1c1c" fill="none" />
          <g fill="#fff" stroke="#1c1c1c" strokeWidth="1.100">
            <circle cx="0" cy="24" r="1.800" />
            <circle cx="7" cy="17.500" r="1.800" />
            <circle cx="14" cy="24" r="1.800" />
            <circle cx="21" cy="17.500" r="1.800" />
          </g>
          <text x="4.500" y="12">{n ? "A" : "1"}</text>
          <text x="19" y="12">{n ? "C" : "5"}</text>
        </g>
      ))}
    </svg>
  </FloatingBar>
);

const Chart = () => (
  <ChartColumn>
    <PaneBox $h={537}>
      <PricePane />
      <Overlay>
        <LegendRow>
          <svg width="18" height="18">
            <circle cx="9" cy="9" r="9" fill="#ecebf5" />
            <path d="M4.500 4.500h4M5.500 7h2.500M6 9.500h2v4.500" fill="none" stroke="#999" strokeWidth="1.300" />
            <path d="M8.500 7.500h2v5.500M8.500 13h3.500" fill="none" stroke="#e0162b" strokeWidth="1.600" />
            <circle cx="10.300" cy="4.700" r="1.200" fill="#e0162b" />
          </svg>
          <Title>TITIJYA · 1D · MYX</Title>
          <Status>
            <StatusHalf $bg="#e4e4e6">
              <svg width="10" height="4"><rect width="10" height="4" rx="2" fill="#4a4a4a" /></svg>
            </StatusHalf>
            <StatusHalf $bg="#dff1df">
              <svg width="10" height="10"><path d="M4 0.500A4.800 4.800 0 1 0 9.500 7 4 4 0 0 1 4 .5zM7.500 1.500v3M6 3h3" fill="#2e7d32" stroke="#2e7d32" strokeWidth=".8" /></svg>
            </StatusHalf>
          </Status>
          <Ohlc $w={48}><b>O</b>0.215</Ohlc>
          <Ohlc $w={47}><b>H</b>0.215</Ohlc>
          <Ohlc $w={45}><b>L</b>0.215</Ohlc>
          <Ohlc $w={46}><b>C</b>0.215</Ohlc>
          <Ohlc $w={92}>+0.005 (+2.38%)</Ohlc>
        </LegendRow>
        <TradeRow>
          <TradeButton $color="#f23645"><strong>0.210</strong>SELL</TradeButton>
          <Spread>0.005</Spread>
          <TradeButton $color="#2962ff"><strong>0.215</strong>BUY</TradeButton>
        </TradeRow>
        <Study mt={7} label="12" />
      </Overlay>
      <WaveTools />
      <CurrencySelect top={4} />
    </PaneBox>
    <PaneBox $h={93}>
      <Frame top={579} h={92} rows={[606, 649]}>
        <path d="M56 601H187V639H478V650H906" fill="none" stroke="#26c6da" strokeWidth="2" />
        <Diamond x={187} y={639} />
        <Diamond x={478} y={650} />
        <AxisText y={650}>0</AxisText>
      </Frame>
      <Overlay><Study /></Overlay>
      <CurrencySelect top={4} />
    </PaneBox>
    <PaneBox $h={101}>
      <Frame top={672} h={100} rows={[692, 750]}>
        <path d="M56 729.500H184.300L189.300 694H475.500L481.500 706.300H906.500V750H56z" fill="#2962ff" />
        <AxisText y={751}>0</AxisText>
      </Frame>
      <Overlay><Study /></Overlay>
      <CurrencySelect top={4} />
    </PaneBox>
    <PaneBox $h={111}>
      <HistogramPane />
      <Overlay><Study /></Overlay>
    </PaneBox>
    <PaneBox $h={130}>
      <PressurePane />
    </PaneBox>
    <PaneBox $h={28}>
      <TimeAxis />
    </PaneBox>
    <RangeBar>
      <Slot $w={30}>1D</Slot>
      <Slot $w={30}>5D</Slot>
      <Slot $w={32}>1M</Slot>
      <Slot $w={32}>3M</Slot>
      <Slot $w={32}>6M</Slot>
      <Slot $w={37}>YTD</Slot>
      <Slot $w={30}>1Y</Slot>
      <Slot $w={26}>5Y</Slot>
      <Slot $w={30}>All</Slot>
      <Divider $ml={4} $mr={9} />
      <Slot $w={28}>
        <Icon sw={1.2}>
          <path d="M5.500 13V7.500c0-1 .7-2 2-2h14c1.300 0 2 1 2 2v13c0 1-.7 2-2 2H15M5.500 9.500h18M10.500 3v4.500M18.500 3v4.500M4 19.500h8M9 16.500l3 3-3 3" />
        </Icon>
      </Slot>
      <Spacer />
      <Slot $w={110}>01:37:36 UTC+8</Slot>
      <Divider $ml={5} $mr={0} />
      <Slot $w={46}>ADJ</Slot>
    </RangeBar>
  </ChartColumn>
);

const App: React.FC = () => (
  <Shell>
    <GlobalStyle />
    <TopBar />
    <Main>
      <LeftBar />
      <Chart />
      <RightBar />
    </Main>
  </Shell>
);

export default App;
